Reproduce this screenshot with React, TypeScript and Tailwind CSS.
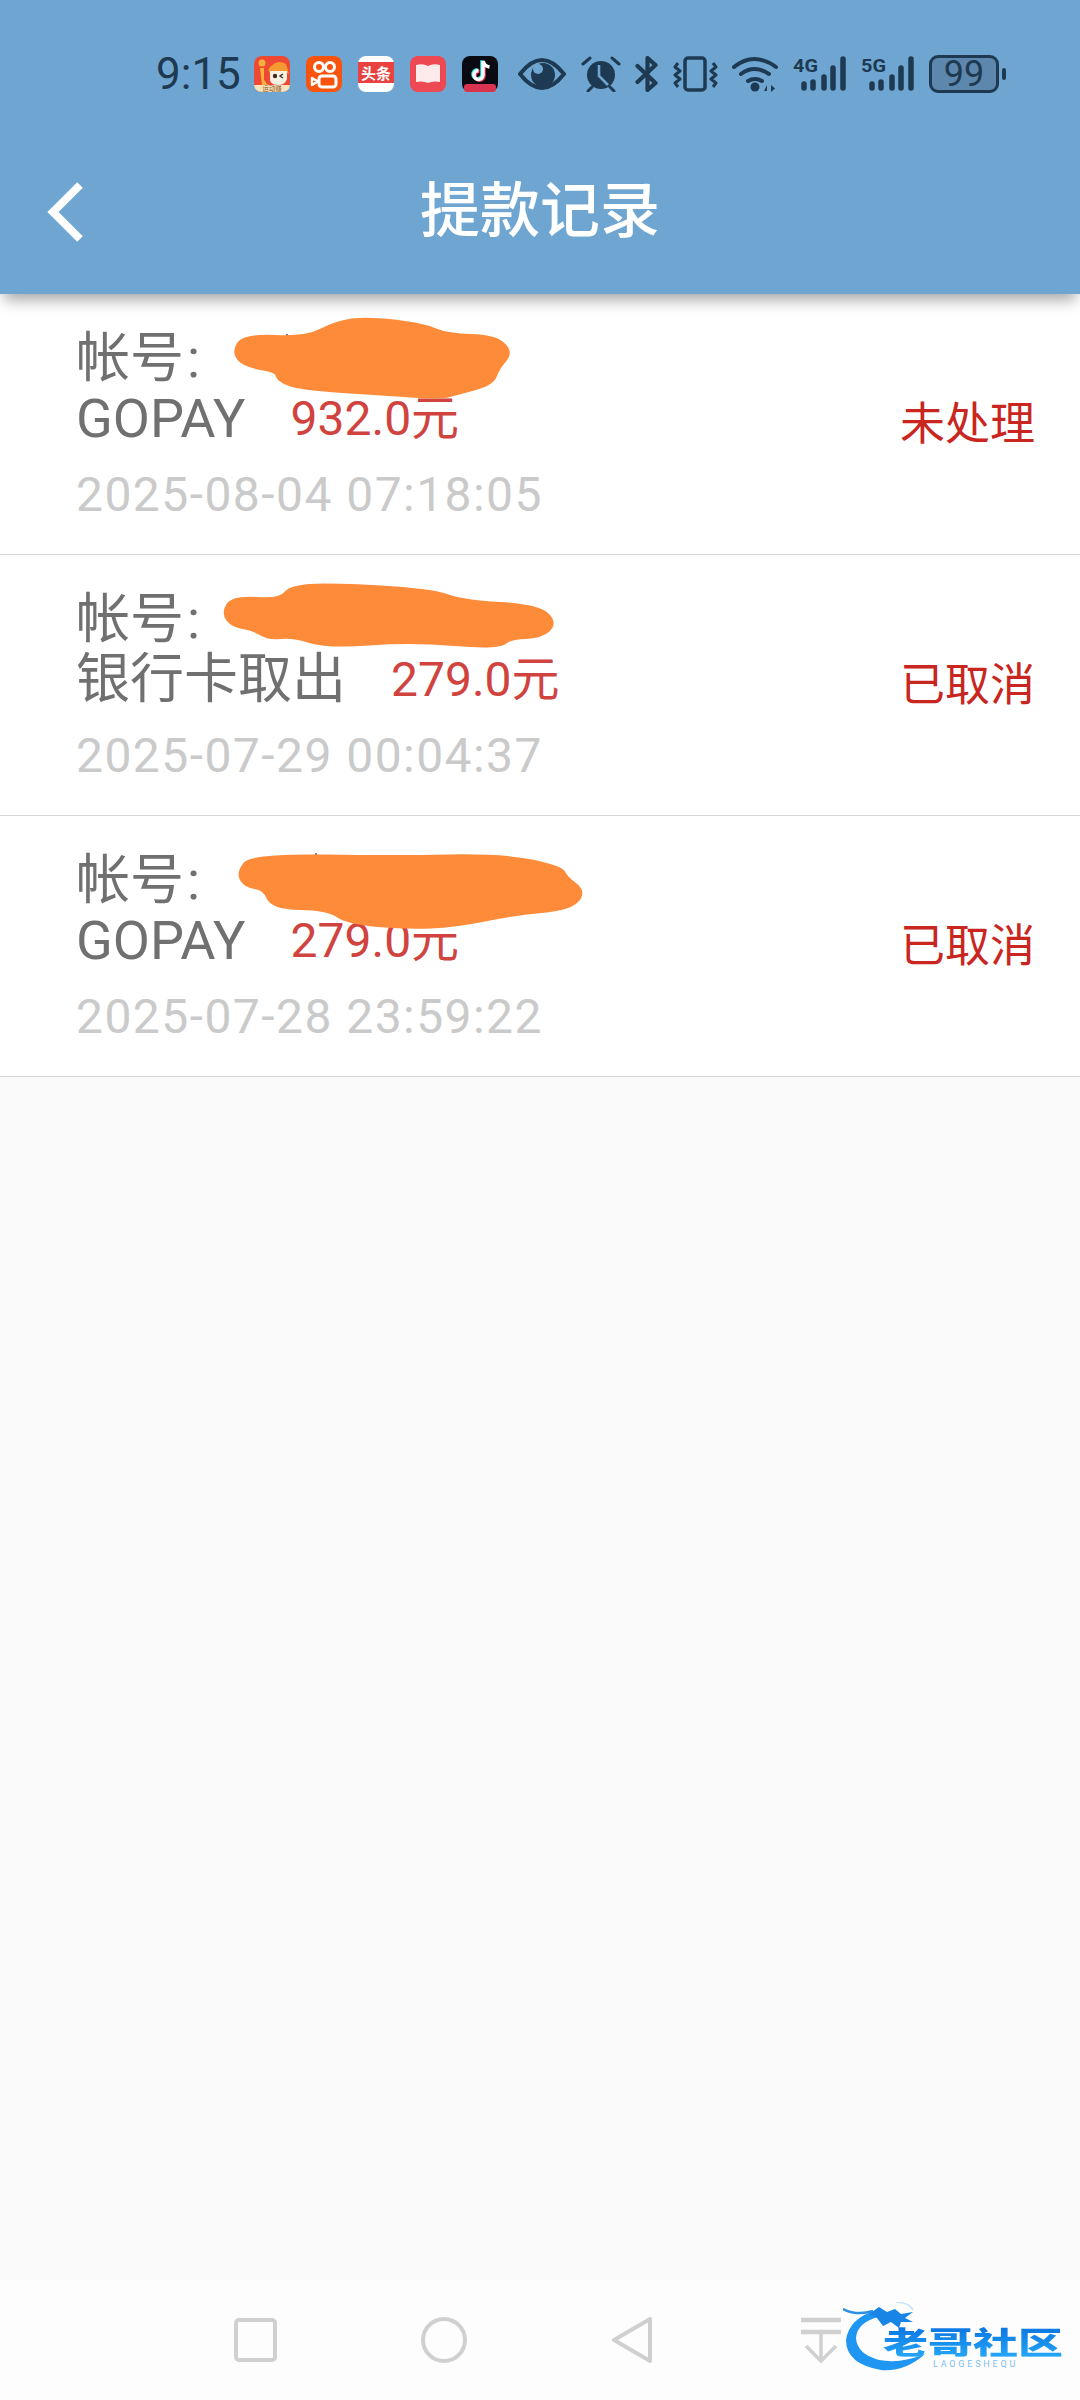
import { ReactNode } from "react";

const sans = "font-['Roboto','Noto_Sans_CJK_SC',sans-serif]";

// redaction scribbles, points are in page coordinates
const blobs = {
  a: [[234, 352], [245, 336], [306, 339], [337, 323], [367, 319], [421, 325], [448, 336], [494, 337], [511, 352], [497, 368], [492, 383], [459, 392], [440, 397], [383, 393], [302, 388], [279, 380], [277, 370], [245, 365]],
  b: [[224, 613], [233, 598], [281, 601], [292, 586], [356, 586], [435, 592], [462, 602], [538, 607], [555, 623], [541, 636], [510, 637], [498, 647], [411, 640], [328, 646], [292, 635], [269, 638], [253, 628], [233, 625]],
  c: [[239, 872], [253, 856], [395, 858], [502, 856], [561, 868], [565, 878], [584, 892], [569, 908], [514, 913], [455, 925], [407, 927], [348, 922], [328, 908], [273, 907], [265, 888], [245, 885]],
};

// rounds the corners: each point becomes a curve through the neighbouring midpoints
function smooth(pts: number[][]) {
  const mid = (a: number[], b: number[]) => `${(a[0] + b[0]) / 2} ${(a[1] + b[1]) / 2}`;
  let d = `M${mid(pts[pts.length - 1], pts[0])}`;
  pts.forEach((p, i) => {
    d += ` Q${p[0]} ${p[1]} ${mid(p, pts[(i + 1) % pts.length])}`;
  });
  return d + " Z";
}

function Blob({ pts, box, speck, className }: { pts: number[][]; box: string; speck?: string; className: string }) {
  const [, , w, h] = box.split(" ");
  return (
    <svg viewBox={box} width={w} height={h} className={`absolute overflow-visible ${className}`}>
      {speck && <path d={speck} stroke="#555" strokeWidth="1.500" />}
      <path d={smooth(pts)} fill="#fe8b39" stroke="#fe8b39" strokeWidth="5" strokeLinejoin="round" />
    </svg>
  );
}

function Row({
  method,
  amount,
  date,
  status,
  children,
}: {
  method: string;
  amount: string;
  date: string;
  status: string;
  children: ReactNode;
}) {
  return (
    <div className="relative flex h-[261px] shrink-0 items-center justify-between border-b border-[#d6d6d6] bg-white pl-[76px] pr-[45px]">
      <div className="flex h-full flex-col pt-[33px]">
        <div className="h-[61px] text-[54px] leading-[64px] text-[#707070]">帐号<span className="ml-[3px]">:</span></div>
        <div className="flex h-[62px] items-center gap-[45px] text-[54px] leading-[62px] text-[#707070]">
          <span>{method}</span>
          <span className="text-[48px] text-[#d0433f]">{amount}</span>
        </div>
        <div className="mt-[15px] h-[60px] text-[48px] leading-[60px] tracking-[1.450px] text-[#cacaca]">{date}</div>
      </div>
      <span className="mt-[1px] text-[45px] text-[#c9261f]">{status}</span>
      {children}
    </div>
  );
}

function AppIcons() {
  return (
    <div className="ml-[14px] flex gap-[16px]">
      <svg width="36" height="36" viewBox="0 0 36 36">
        <rect width="36" height="36" rx="8" fill="#ee4a33" />
        <path d="M0 29h36a8 7 0 0 1-8 7H8a8 7 0 0 1-8-7z" fill="#f9e3bd" />
        <circle cx="8" cy="7" r="3.500" fill="#f8b13c" />
        <path d="M6 12h4v12l4 5H8z" fill="#f8b13c" />
        <path d="M14 14Q22 2 32 8l3 10-4-2-15 1z" fill="#f59a31" />
        <path d="M16 15h17v8q-2 6-9 6-9 0-8-8z" fill="#f7f1e4" />
        <circle cx="21" cy="20" r="2.200" fill="#3c2a20" />
        <path d="M29 18l-3 2 3 2" stroke="#3c2a20" strokeWidth="1.300" fill="none" />
        <text x="18" y="35" textAnchor="middle" fontSize="6.500" fill="#8a5426" fontFamily="Noto Sans CJK SC">运动赚</text>
      </svg>
      <svg width="36" height="36" viewBox="0 0 36 36">
        <rect width="36" height="36" rx="8" fill="#f9540e" />
        <circle cx="13" cy="11" r="4.500" fill="none" stroke="#fff" strokeWidth="3" />
        <circle cx="24" cy="11" r="4.500" fill="none" stroke="#fff" strokeWidth="3" />
        <rect x="13" y="20" width="17" height="11" rx="3" fill="none" stroke="#fff" strokeWidth="3" />
        <path d="M6 22l6 3.500-6 3.500z" fill="none" stroke="#fff" strokeWidth="2.400" strokeLinejoin="round" />
      </svg>
      <svg width="36" height="36" viewBox="0 0 36 36">
        <rect width="36" height="36" rx="8" fill="#fff" />
        <rect y="6" width="36" height="21" fill="#e8413f" />
        <text x="18" y="22.500" textAnchor="middle" fontSize="15" fontWeight="700" fill="#fff" fontFamily="Noto Sans CJK SC">头条</text>
      </svg>
      <svg width="36" height="36" viewBox="0 0 36 36">
        <rect width="36" height="36" rx="8" fill="#ee4853" />
        <path d="M6 9q7-2 12 1 5-3 12-1v17q-7-1.500-12 1-5-2.500-12-1z" fill="#fdeaea" />
      </svg>
      <svg width="36" height="36" viewBox="0 0 36 36">
        <rect width="36" height="36" rx="8" fill="#0a0a12" />
        <path d="M21 5v14a4.500 4.500 0 1 1-4.500-4.500" fill="none" stroke="#25f4ee" strokeWidth="3.500" transform="translate(-1 -.8)" />
        <path d="M21 5v14a4.500 4.500 0 1 1-4.500-4.500" fill="none" stroke="#fe2c55" strokeWidth="3.500" transform="translate(1 .8)" />
        <path d="M21 5v14a4.500 4.500 0 1 1-4.500-4.500M21 5q1 5 6.500 6" fill="none" stroke="#fff" strokeWidth="3.500" />
        <rect x="2" y="28" width="32" height="8" rx="3" fill="#d9334f" />
      </svg>
    </div>
  );
}

function Signal({ label }: { label: string }) {
  return (
    <svg width="54" height="36" viewBox="0 0 54 36" className="overflow-visible">
      <text x="0" y="16" fontSize="19" fontWeight="700" fill="currentColor" fontFamily="Roboto" textLength="25" lengthAdjust="spacingAndGlyphs">{label}</text>
      <g stroke="currentColor" strokeWidth="5.500" strokeLinecap="round">
        <path d="M11 28v4" />
        <path d="M20 26v6" />
        <path d="M31 21v11" />
        <path d="M40 12v20" />
        <path d="M50 3v29" />
      </g>
    </svg>
  );
}

function StatusIcons() {
  return (
    <div className="ml-[20px] flex items-center text-[#1e3a52]">
      {/* eye */}
      <svg width="48" height="32" viewBox="0 0 48 32">
        <path d="M2 16Q13 2 24 2t22 14Q35 30 24 30T2 16z" fill="none" stroke="currentColor" strokeWidth="4" strokeLinejoin="round" />
        <circle cx="25" cy="17" r="12" fill="currentColor" />
        <circle cx="20" cy="11" r="5" fill="#6fa6d1" />
      </svg>
      {/* alarm */}
      <svg width="40" height="36" viewBox="0 0 40 36" className="ml-[15px]">
        <circle cx="20" cy="19" r="14" fill="currentColor" />
        <path d="M18 9v11l9 9" fill="none" stroke="#6fa6d1" strokeWidth="2.600" />
        <path d="M2 8l7-6M38 8l-7-6M7 35l4-4M33 35l-4-4" stroke="currentColor" strokeWidth="3" strokeLinecap="round" />
      </svg>
      {/* bluetooth */}
      <svg width="23" height="36" viewBox="0 0 23 36" className="ml-[14px]">
        <path d="M2.500 10l18 17-8 7V2l8 7-18 17" fill="none" stroke="currentColor" strokeWidth="4.200" strokeLinecap="round" strokeLinejoin="round" />
      </svg>
      {/* vibrate */}
      <svg width="45" height="36" viewBox="0 0 45 36" className="ml-[15px]">
        <rect x="12" y="2" width="20" height="32" rx="3" fill="none" stroke="currentColor" strokeWidth="3.500" />
        <path d="M5 7L2 11l5 4-5 4 5 4-5 4 3 4M40 7l3 4-5 4 5 4-5 4 5 4-3 4" fill="none" stroke="currentColor" strokeWidth="3" strokeLinejoin="round" />
      </svg>
      {/* wifi */}
      <svg width="47" height="36" viewBox="0 0 47 36" className="ml-[14px]">
        <g fill="none" stroke="currentColor" strokeWidth="4" strokeLinecap="round">
          <path d="M2 11Q22-5 44 11" />
          <path d="M9 18Q22 8 37 18" />
          <path d="M16 25q7-4 14 0" />
        </g>
        <circle cx="23" cy="31" r="4.500" fill="currentColor" />
        <path d="M35 29l-3 6h3zM39 29l4 3.500-4 3.500z" fill="currentColor" />
      </svg>
      <div className="ml-[14px]"><Signal label="4G" /></div>
      <div className="ml-[14px]"><Signal label="5G" /></div>
      {/* battery */}
      <div className="ml-[14px] flex h-[38px] w-[70px] items-center justify-center rounded-[9px] border-[3px] border-[#1e3a52] bg-[#5d87ad] text-[36px] leading-none">99</div>
      <div className="ml-[3px] h-[12px] w-[4px] rounded-full bg-[#1e3a52]" />
    </div>
  );
}

function NavBar() {
  return (
    <div className="relative flex h-[120px] shrink-0 items-center bg-[#fdfdfd] pl-[234px]">
      <svg width="43" height="44" viewBox="0 0 43 44">
        <rect x="2" y="2" width="39" height="40" rx="3" fill="none" stroke="#d0d0d0" strokeWidth="4" />
      </svg>
      <svg width="46" height="46" viewBox="0 0 46 46" className="ml-[144px]">
        <circle cx="23" cy="23" r="21" fill="none" stroke="#d0d0d0" strokeWidth="4" />
      </svg>
      <svg width="40" height="46" viewBox="0 0 40 46" className="ml-[145px]">
        <path d="M38 2v42L2 23z" fill="none" stroke="#d0d0d0" strokeWidth="4" strokeLinejoin="round" />
      </svg>
      <svg width="40" height="46" viewBox="0 0 40 46" className="ml-[149px]">
        <path d="M0 3h40M0 15h40" stroke="#d0d0d0" strokeWidth="4.500" />
        <path d="M20 15v29M5 29l15 15 15-15" fill="none" stroke="#d0d0d0" strokeWidth="3.500" />
      </svg>
      {/* watermark logo */}
      <div className="absolute left-[843px] top-[22px] h-[72px] w-[225px]">
        <svg width="90" height="72" viewBox="0 0 90 72" className="absolute left-0 top-0">
          <path d="M34 8Q6 16 3 38 3 62 38 68 62 70 82 52 58 62 36 58 14 52 13 36 14 20 38 14z" fill="#1f97f2" />
          <path d="M0 7Q14 14 30 9" fill="none" stroke="#2a8fe6" strokeWidth="2.500" />
          <path d="M26 12L36 5l8 5 8-3 6 5 12-2-8 6 8 4H58l-2 6-8-6-8 4-6-8z" fill="#1784e6" />
          <path d="M53 0q14 1 17 8" fill="none" stroke="#c5e3f9" strokeWidth="1.500" />
        </svg>
        <div className="absolute left-[40px] top-[16px] h-[46px] w-[184px] origin-center scale-y-[0.68] bg-gradient-to-b from-[#0c72e0] to-[#25a6f7] bg-clip-text text-[45px] leading-[46px] font-black text-transparent font-['Noto_Sans_CJK_SC',sans-serif]">老哥社区</div>
        <div className="absolute left-[90px] top-[58px] text-[9px] leading-[9px] tracking-[2.800px] text-[#7fbdf0]">LAOGESHEQU</div>
      </div>
    </div>
  );
}

export default function App() {
  return (
    <div className={`flex h-[2400px] w-[1080px] flex-col overflow-hidden bg-[#fafafa] ${sans}`}>
      <header className="relative z-10 h-[294px] shrink-0 bg-[#6fa6d1] shadow-[0_10px_14px_-4px_rgba(0,0,0,0.35)]">
        <div className="flex h-[147px] items-start pl-[156px] pt-[51px]">
          <div className="flex h-[46px] items-center">
            <span className="w-[84px] text-[44px] leading-none text-[#1e3a52]">9:15</span>
            <AppIcons />
            <StatusIcons />
          </div>
        </div>
        <div className="relative flex h-[126px] items-start justify-center pt-[4px]">
          <span className="text-[60px] leading-[122px] font-medium text-white">提款记录</span>
          <svg width="37" height="60" viewBox="0 0 37 60" className="absolute left-[47px] top-[35px]">
            <path d="M33 3L6 30l27 27" fill="none" stroke="#fff" strokeWidth="8" />
          </svg>
        </div>
      </header>

      <Row method="GOPAY" amount="932.0元" date="2025-08-04 07:18:05" status="未处理">
        <Blob pts={blobs.a} box="234 319 277 78" speck="M287 334v5" className="left-[234px] top-[25px]" />
      </Row>
      <Row method="银行卡取出" amount="279.0元" date="2025-07-29 00:04:37" status="已取消">
        <Blob pts={blobs.b} box="224 586 331 61" className="left-[224px] top-[31px]" />
      </Row>
      <Row method="GOPAY" amount="279.0元" date="2025-07-28 23:59:22" status="已取消">
        <Blob pts={blobs.c} box="239 856 345 71" speck="M316 853v5" className="left-[239px] top-[40px]" />
      </Row>

      <div className="flex-1" />
      <NavBar />
    </div>
  );
}
